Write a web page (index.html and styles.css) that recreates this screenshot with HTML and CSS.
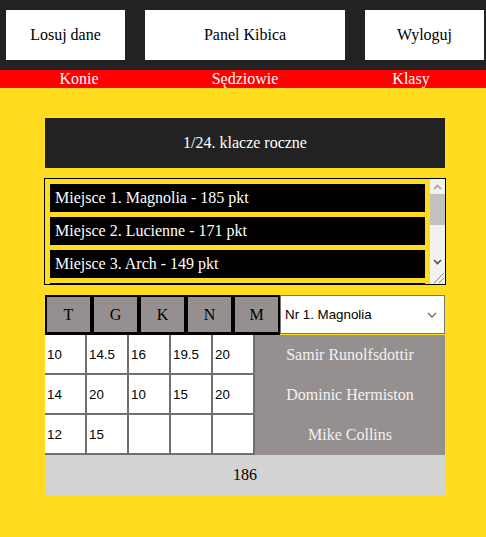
FILE: index.html
```html
<!DOCTYPE html>
<html lang="pl">
<head>
<meta charset="utf-8">
<title>Panel</title>
<link rel="stylesheet" href="styles.css">
</head>
<body>
<header class="topbar">
  <button class="top-btn">Losuj dane</button>
  <button class="top-btn">Panel Kibica</button>
  <button class="top-btn">Wyloguj</button>
</header>
<nav class="tabs">
  <span class="tab">Konie</span>
  <span class="tab">Sędziowie</span>
  <span class="tab">Klasy</span>
</nav>
<main class="board">
  <div class="title">1/24. klacze roczne</div>
  <div class="ranking">
    <div class="rank-list">
      <div class="rank-item">Miejsce 1. Magnolia - 185 pkt</div>
      <div class="rank-item">Miejsce 2. Lucienne - 171 pkt</div>
      <div class="rank-item">Miejsce 3. Arch - 149 pkt</div>
      <div class="rank-item">Miejsce 4. Bella - 140 pkt</div>
    </div>
    <div class="scrollbar">
      <div class="sb-btn">
        <svg width="9" height="6" viewBox="0 0 9 6"><path d="M1 5 L4.5 1.5 L8 5" fill="none" stroke="#a3a3a3" stroke-width="1.6"/></svg>
      </div>
      <div class="sb-track"><div class="sb-thumb"></div></div>
      <div class="sb-btn">
        <svg width="9" height="6" viewBox="0 0 9 6"><path d="M1 1 L4.5 4.5 L8 1" fill="none" stroke="#505050" stroke-width="1.6"/></svg>
      </div>
      <div class="sb-resizer">
        <svg width="15" height="15" viewBox="0 0 15 15"><path d="M4 14 L14 4 M9 14 L14 9" stroke="#8a8a8a" stroke-width="1"/></svg>
      </div>
    </div>
  </div>
  <section class="scores">
    <div class="score-head">
      <button class="cat">T</button>
      <button class="cat">G</button>
      <button class="cat">K</button>
      <button class="cat">N</button>
      <button class="cat">M</button>
      <div class="select-wrap">
        <select class="horse-select">
          <option>Nr 1. Magnolia</option>
          <option>Nr 2. Lucienne</option>
          <option>Nr 3. Arch</option>
        </select>
        <svg class="chevron" width="10" height="6" viewBox="0 0 10 6"><path d="M1 1 L5 5 L9 1" fill="none" stroke="#6b6b6b" stroke-width="1.3"/></svg>
      </div>
    </div>
    <div class="score-grid">
      <div class="cell">10</div><div class="cell">14.5</div><div class="cell">16</div><div class="cell">19.5</div><div class="cell">20</div>
      <div class="judge">Samir Runolfsdottir</div>
      <div class="cell">14</div><div class="cell">20</div><div class="cell">10</div><div class="cell">15</div><div class="cell">20</div>
      <div class="judge">Dominic Hermiston</div>
      <div class="cell">12</div><div class="cell">15</div><div class="cell"></div><div class="cell"></div><div class="cell"></div>
      <div class="judge">Mike Collins</div>
    </div>
    <div class="total">186</div>
  </section>
</main>
</body>
</html>
```

FILE: styles.css
```css
html, body {
  margin: 0;
  padding: 0;
}
body {
  background: #ffdc1e;
  font-family: "Liberation Serif", "Times New Roman", serif;
  font-size: 16px;
  color: #000;
}
.topbar {
  background: #222222;
  display: grid;
  grid-template-columns: 119px 200px 119px;
  column-gap: 20px;
  padding: 10px 2px 10px 6px;
}
.top-btn {
  height: 50px;
  background: #fff;
  border: none;
  margin: 0;
  padding: 0;
  font-family: "Liberation Serif", "Times New Roman", serif;
  font-size: 16px;
  color: #000;
}
.tabs {
  background: #ff0000;
  display: grid;
  grid-template-columns: 158px 158px 158px;
  column-gap: 8px;
  height: 18px;
  line-height: 18px;
  color: #fff;
  text-align: center;
  overflow: hidden;
}
.board {
  width: 400px;
  margin: 30px 0 0 45px;
  display: flex;
  flex-direction: column;
  gap: 10px;
}
.title {
  background: #222222;
  color: #fff;
  height: 50px;
  display: flex;
  align-items: center;
  justify-content: center;
}
.ranking {
  box-sizing: border-box;
  height: 107px;
  margin: 0 -1px;
  border: 1px solid #000;
  display: flex;
}
.rank-list {
  flex: 1;
  min-width: 0;
  overflow: hidden;
  padding: 5px 5px 0;
  display: flex;
  flex-direction: column;
  gap: 5px;
}
.rank-item {
  flex: none;
  background: #000;
  color: #fff;
  height: 28px;
  line-height: 28px;
  padding: 0 5px;
}
.scrollbar {
  flex: none;
  width: 15px;
  background: #f1f1f1;
  display: flex;
  flex-direction: column;
}
.sb-btn {
  height: 15px;
  display: flex;
  align-items: center;
  justify-content: center;
}
.sb-track {
  flex: 1;
  display: flex;
  flex-direction: column;
}
.sb-thumb {
  height: 31px;
  background: #c1c1c1;
}
.sb-resizer {
  height: 15px;
}
.sb-resizer svg {
  display: block;
}
.score-head {
  display: grid;
  grid-template-columns: repeat(5, 1fr) 165px;
  height: 40px;
}
.cat {
  margin: 0;
  padding: 0;
  background: #968f8f;
  border: 2px solid #000;
  border-bottom-width: 3px;
  font-family: "Liberation Serif", "Times New Roman", serif;
  font-size: 16px;
  color: #000;
}
.select-wrap {
  position: relative;
  height: 39px;
}
.horse-select {
  -webkit-appearance: none;
  appearance: none;
  box-sizing: border-box;
  width: 100%;
  height: 39px;
  margin: 0;
  background: #fff;
  border: 1px solid #767676;
  border-radius: 0;
  font-family: "Liberation Sans", Arial, sans-serif;
  font-size: 13.33px;
  color: #000;
  padding: 0 20px 0 4px;
}
.chevron {
  position: absolute;
  right: 8px;
  top: 17px;
  pointer-events: none;
}
.score-grid {
  display: grid;
  grid-template-columns: repeat(5, 42px) 1fr;
  grid-auto-rows: 40px;
}
.cell {
  box-sizing: border-box;
  background: #fff;
  border-right: 2px solid #707070;
  border-bottom: 2px solid #707070;
  font-family: "Liberation Sans", Arial, sans-serif;
  font-size: 13.33px;
  display: flex;
  align-items: center;
  padding-left: 2px;
}
.judge {
  background: #968f8f;
  color: #f2f2f2;
  display: flex;
  align-items: center;
  justify-content: center;
}
.total {
  background: #d3d3d3;
  height: 40px;
  display: flex;
  align-items: center;
  justify-content: center;
}
```
